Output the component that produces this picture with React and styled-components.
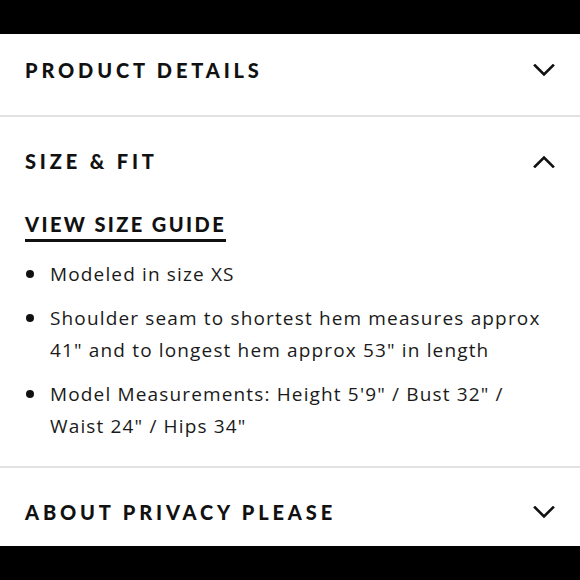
import React, { useState } from 'react';
import styled, { createGlobalStyle } from 'styled-components';

const GlobalStyle = createGlobalStyle`
  html, body {
    margin: 0;
    padding: 0;
    background: #fff;
  }
  body {
    font-family: "Open Sans", "Liberation Sans", sans-serif;
    color: #111;
  }
`;

const Frame = styled.div`
  width: 580px;
  height: 580px;
  display: flex;
  flex-direction: column;
  overflow: hidden;
`;

const Letterbox = styled.div`
  height: ${props => props.$height}px;
  flex-shrink: 0;
  background: #000;
`;

const Accordion = styled.div`
  flex: 1;
  display: flex;
  flex-direction: column;
  background: #fff;
`;

const Section = styled.section`
  border-bottom: ${props => (props.$last ? 'none' : '2px solid #e2e2e2')};
`;

const Header = styled.button`
  width: 100%;
  display: flex;
  align-items: center;
  justify-content: space-between;
  padding: ${props => props.$top}px 25px ${props => props.$bottom}px 25px;
  border: none;
  background: transparent;
  cursor: pointer;
  text-align: left;
`;

const HeaderTitle = styled.span`
  font-family: "Lato", "Liberation Sans", sans-serif;
  font-size: 20px;
  font-weight: 900;
  letter-spacing: 3.85px;
  line-height: 28px;
  color: #111;
  text-transform: uppercase;
`;

const Chevron = styled.svg`
  width: 22px;
  height: 13px;
  flex-shrink: 0;
`;

const Body = styled.div`
  padding: 36px 25px 24px 25px;
`;

const GuideLink = styled.a`
  display: inline-block;
  font-family: "Lato", "Liberation Sans", sans-serif;
  font-size: 20px;
  font-weight: 900;
  letter-spacing: 2.4px;
  line-height: 26px;
  color: #111;
  text-decoration: none;
  text-transform: uppercase;
  border-bottom: 3px solid #111;
  padding-bottom: 2px;
  cursor: pointer;
`;

const List = styled.ul`
  list-style: none;
  margin: 16px 0 0 0;
  padding: 0;
  display: flex;
  flex-direction: column;
  gap: 12px;
`;

const Item = styled.li`
  display: flex;
  font-family: "Open Sans", "Liberation Sans", sans-serif;
  font-size: 19px;
  letter-spacing: 1.15px;
  line-height: 32px;
  color: #1a1a1a;
`;

const Dot = styled.span`
  width: 8px;
  height: 8px;
  border-radius: 50%;
  background: #111;
  flex-shrink: 0;
  margin: 12px 16px 0 1px;
`;

function ChevronIcon({ up }) {
  return (
    <Chevron viewBox="0 0 22 13" fill="none">
      <path
        d={up ? 'M2 11.5 L11 2.5 L20 11.5' : 'M2 1.5 L11 10.5 L20 1.5'}
        stroke="#111"
        strokeWidth="2.6"
        strokeLinecap="square"
      />
    </Chevron>
  );
}

const sizeFit = [
  'Modeled in size XS',
  'Shoulder seam to shortest hem measures approx 41" and to longest hem approx 53" in length',
  'Model Measurements: Height 5\'9" / Bust 32" / Waist 24" / Hips 34"',
];

export default function App() {
  const [open, setOpen] = useState('size');

  const toggle = key => setOpen(open === key ? null : key);

  return (
    <>
      <GlobalStyle />
      <Frame>
        <Letterbox $height={34} />
        <Accordion>
          <Section>
            <Header $top={22} $bottom={31} onClick={() => toggle('details')}>
              <HeaderTitle>Product Details</HeaderTitle>
              <ChevronIcon up={open === 'details'} />
            </Header>
          </Section>
          <Section>
            <Header $top={30} $bottom={0} onClick={() => toggle('size')}>
              <HeaderTitle>Size &amp; Fit</HeaderTitle>
              <ChevronIcon up={open === 'size'} />
            </Header>
            {open === 'size' && (
              <Body>
                <GuideLink>View Size Guide</GuideLink>
                <List>
                  {sizeFit.map(text => (
                    <Item key={text}>
                      <Dot />
                      <span>{text}</span>
                    </Item>
                  ))}
                </List>
              </Body>
            )}
          </Section>
          <Section $last>
            <Header $top={30} $bottom={20} onClick={() => toggle('privacy')}>
              <HeaderTitle>About Privacy Please</HeaderTitle>
              <ChevronIcon up={open === 'privacy'} />
            </Header>
          </Section>
        </Accordion>
        <Letterbox $height={35} />
      </Frame>
    </>
  );
}
